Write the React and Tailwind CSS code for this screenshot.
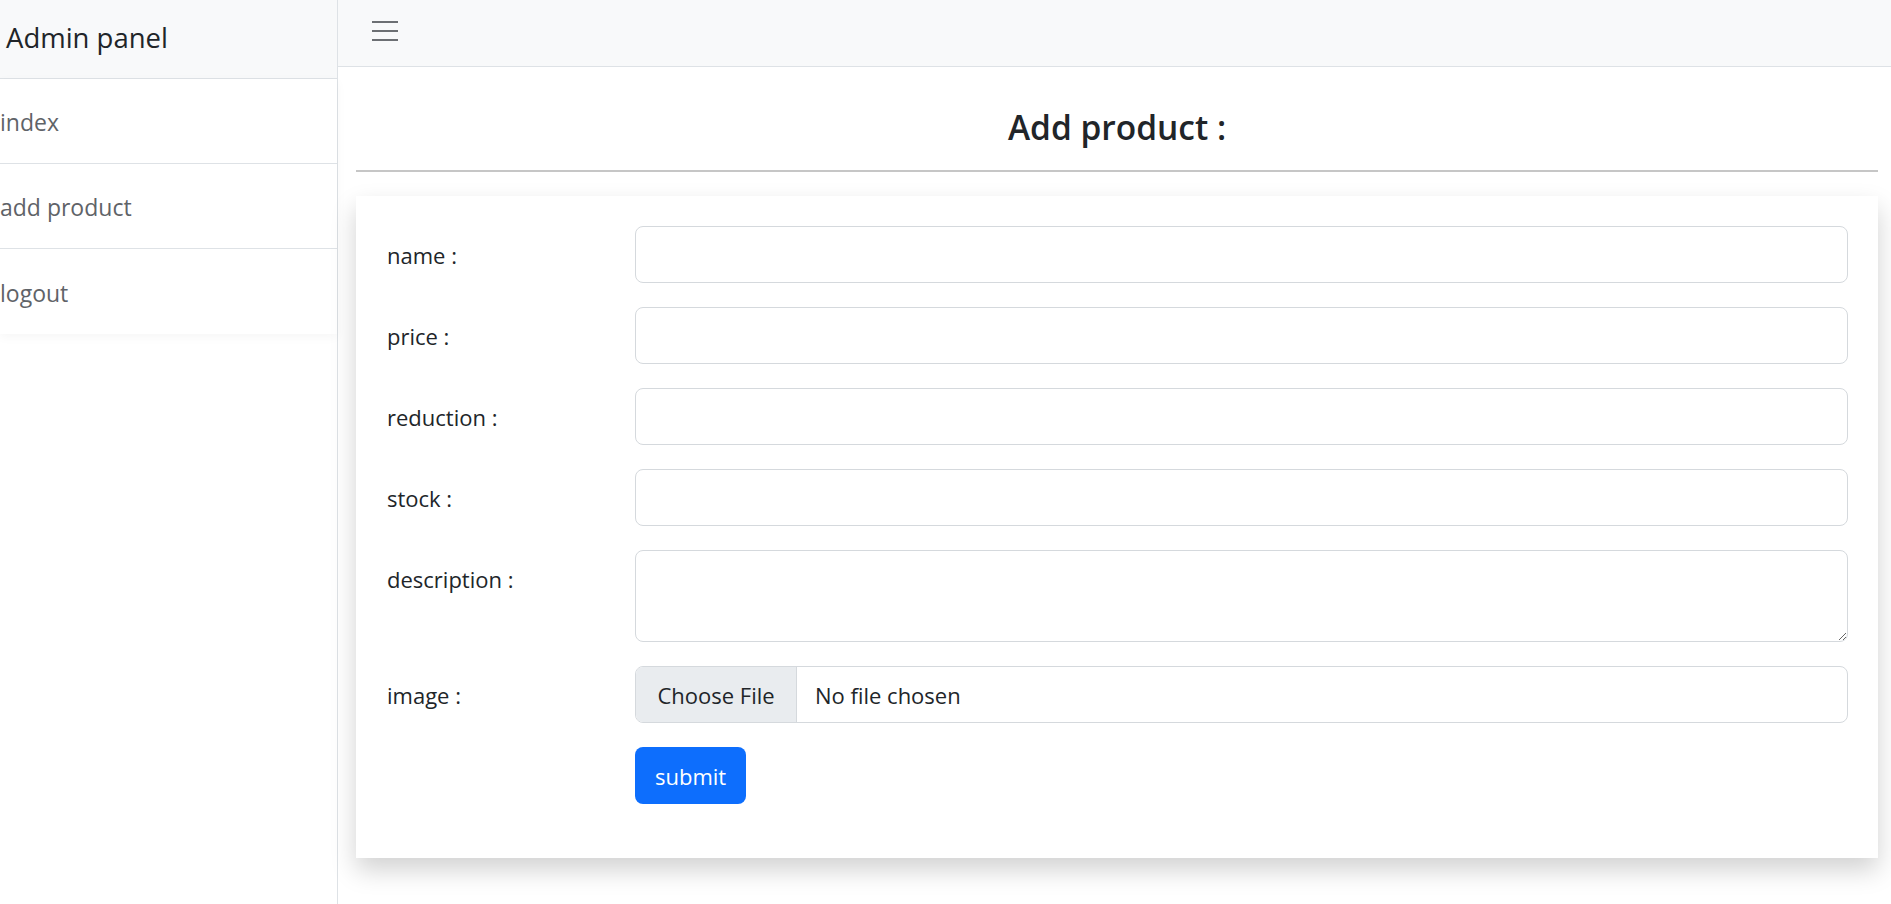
import React from 'react'

const fields = [
  { label: 'name :', type: 'text' },
  { label: 'price :', type: 'text' },
  { label: 'reduction :', type: 'text' },
  { label: 'stock :', type: 'text' },
]

const links = ['index', 'add product', 'logout']

export default function App() {
  return (
    <div className="flex h-screen w-full bg-white text-[#212529] font-['Open_Sans','Noto_Sans',sans-serif]">
      {/* Sidebar */}
      <aside className="w-[338px] shrink-0 border-r border-[#dee2e6] bg-white">
        <div className="h-[79px] bg-[#f8f9fa] border-b border-[#dee2e6] flex items-center pl-[6px] pb-[3px]">
          <span className="text-[27.5px] text-[#212529]">Admin panel</span>
        </div>
        <ul className="shadow-[0_3px_10px_rgba(0,0,0,0.04)]">
          {links.map((l, i) => (
            <li
              key={l}
              className={
                'h-[85px] flex items-center text-[23px] text-[#5f6368] pt-[3px] ' +
                (i < links.length - 1 ? 'border-b border-[#dee2e6]' : '')
              }
            >
              {l}
            </li>
          ))}
        </ul>
      </aside>

      {/* Main */}
      <main className="flex-1 flex flex-col">
        <nav className="h-[67px] bg-[#f8f9fa] border-b border-[#dee2e6] flex items-center pl-[34px] shrink-0">
          <svg width="26" height="22" viewBox="0 0 26 22" className="mt-[-4px]">
            <path d="M0 2h26M0 11h26M0 20h26" stroke="#6c6f73" strokeWidth="2" />
          </svg>
        </nav>

        <div className="pl-[18px] pr-[13px]">
          <h3 className="text-center text-[33.5px] font-semibold leading-[38px] mt-[41px] mb-[24px] text-[#212529]">
            Add product :
          </h3>
          <hr className="border-0 border-t-2 border-[#c6c6c6]" />

          <form className="mt-[24px] bg-white shadow-[0_12px_24px_rgba(0,0,0,0.18)] pt-[30px] pb-[54px] pl-[31px] pr-[30px] flex flex-col gap-[24px] text-[22px]">
            {fields.map((f) => (
              <div key={f.label} className="flex">
                <label className="w-[248px] shrink-0 pt-[11px] leading-[36px]">{f.label}</label>
                <input
                  type={f.type}
                  className="flex-1 h-[57px] rounded-[8px] border border-[#d5d9dd] px-[18px] outline-none"
                />
              </div>
            ))}

            <div className="flex">
              <label className="w-[248px] shrink-0 pt-[11px] leading-[36px]">description :</label>
              <textarea className="flex-1 h-[92px] rounded-[8px] border border-[#d5d9dd] px-[18px] py-[9px] outline-none resize-y" />
            </div>

            <div className="flex">
              <label className="w-[248px] shrink-0 pt-[11px] leading-[36px]">image :</label>
              <div className="flex-1 h-[57px] rounded-[8px] border border-[#d5d9dd] flex items-stretch overflow-hidden">
                <span className="w-[161px] bg-[#e9ecef] border-r border-[#d5d9dd] flex items-center justify-center pt-[2px] text-[#212529]">
                  Choose File
                </span>
                <span className="flex items-center pl-[18px] pt-[2px] text-[#212529]">No file chosen</span>
              </div>
            </div>

            <div className="flex">
              <div className="w-[248px] shrink-0" />
              <button
                type="button"
                className="h-[57px] px-[20px] pt-[2px] rounded-[8px] bg-[#0d6efd] text-white text-[22px]"
              >
                submit
              </button>
            </div>
          </form>
        </div>
      </main>
    </div>
  )
}
